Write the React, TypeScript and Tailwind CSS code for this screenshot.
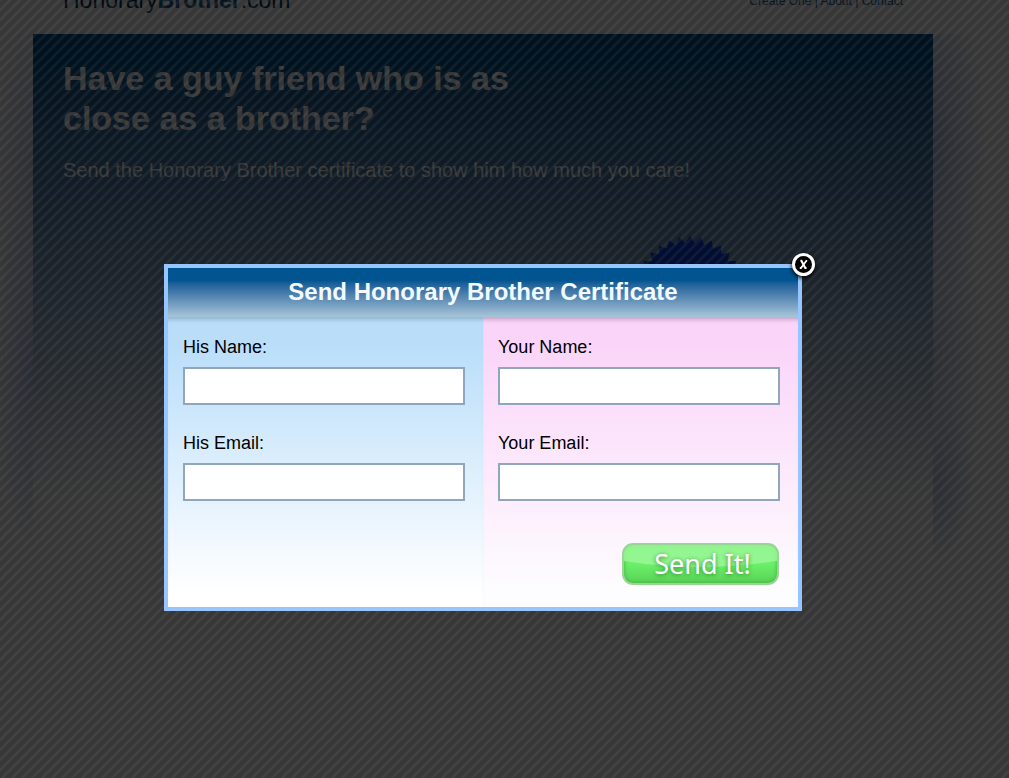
import React from "react";

const sealPoints = Array.from({ length: 64 }, (_, i) => {
  const radius = i % 2 === 0 ? 56 : 49;
  const angle = (i * Math.PI) / 32 - Math.PI / 2;
  return `${56 + radius * Math.cos(angle)},${56 + radius * Math.sin(angle)}`;
}).join(" ");

function Field({ id, label, type }: { id: string; label: string; type: string }) {
  return (
    <div className="h-24">
      <label htmlFor={id} className="block text-lg leading-5">
        {label}
      </label>
      <input
        id={id}
        type={type}
        className="mt-[10px] block h-[38px] w-full border-2 border-[#91a5bc] bg-white px-2 text-lg outline-none"
      />
    </div>
  );
}

function Backdrop() {
  return (
    <svg className="absolute inset-0 h-full w-full" aria-hidden="true">
      <defs>
        <pattern id="stripes" width="10" height="10" patternUnits="userSpaceOnUse">
          <path d="M-2 2 2-2M-2 12 12-2M8 12 12 8" stroke="#fff" strokeOpacity="0.055" strokeWidth="2.6" />
        </pattern>
      </defs>
      <rect width="100%" height="100%" fill="#000" fillOpacity="0.785" />
      <rect width="100%" height="100%" fill="url(#stripes)" />
    </svg>
  );
}

function Page() {
  return (
    <div className="min-h-screen bg-white">
      <header className="ml-[33px] mr-[76px] flex h-[34px] items-start justify-between overflow-hidden px-[30px]">
        <a href="#home" className="-mt-3 text-[23px] leading-6 text-[#003055]">
          Honorary<b className="text-[#16659c]">Brother</b>.com
        </a>
        <nav className="-mt-[7px] text-xs leading-4 text-[#16659c]">
          <a href="#create">Create One</a> | <a href="#about">About</a> | <a href="#contact">Contact</a>
        </nav>
      </header>
      <div className="flex">
        <div className="h-[520px] w-[33px] bg-[radial-gradient(ellipse_40px_180px_at_100%_65%,#c0ccf4,transparent),radial-gradient(ellipse_40px_180px_at_100%_28%,#d4daf4,transparent)]" />
        <main className="h-[520px] flex-1 bg-linear-to-b from-[#005591] from-5% to-white to-90% px-[30px] pt-6">
          <h1 className="max-w-[500px] text-[34px] font-bold leading-10 text-white">
            Have a guy friend who is as close as a brother?
          </h1>
          <p className="mt-5 text-xl leading-6 text-white">
            Send the Honorary Brother certificate to show him how much you care!
          </p>
          <svg className="ml-[571px] mt-[54px] size-[112px]" viewBox="0 0 112 112" aria-hidden="true">
            <polygon points={sealPoints} fill="#0c42e0" />
          </svg>
        </main>
        <div className="h-[520px] w-[76px] bg-[radial-gradient(ellipse_55px_170px_at_0%_22%,#c0ccf4,transparent),radial-gradient(ellipse_50px_220px_at_0%_62%,#cfd9f0,transparent),radial-gradient(ellipse_40px_80px_at_0%_86%,#c8d4f4,transparent)]" />
      </div>
    </div>
  );
}

function CertificateDialog() {
  return (
    <section
      role="dialog"
      aria-labelledby="dialog-title"
      className="absolute left-[164px] top-[264px] w-[638px] border-4 border-[#99c5ff] bg-white text-black"
    >
      <header className="h-[49px] bg-linear-to-b from-[#005591] from-25% to-[#a8c5d8] pt-[9px] text-center">
        <h2 id="dialog-title" className="text-2xl font-bold leading-[30px] text-[#f2faff]">
          Send Honorary Brother Certificate
        </h2>
      </header>
      <form className="grid grid-cols-2" onSubmit={(event) => event.preventDefault()}>
        <div className="bg-linear-to-b from-[#badefa] from-10% to-white to-95% pl-[15px] pr-[18px] pt-5 shadow-[inset_0_6px_5px_-4px_#527da080]">
          <Field id="his-name" label="His Name:" type="text" />
          <Field id="his-email" label="His Email:" type="email" />
        </div>
        <div className="bg-linear-to-b from-[#fad5f9] from-10% to-[#fdfdff] to-95% pb-[22px] pl-[15px] pr-[18px] pt-5 shadow-[inset_0_6px_5px_-4px_#805c8080]">
          <Field id="your-name" label="Your Name:" type="text" />
          <Field id="your-email" label="Your Email:" type="email" />
          <button
            type="submit"
            className="relative ml-auto mr-px mt-[14px] flex h-[42px] w-[157px] items-center justify-center overflow-hidden rounded-[11px] border-2 border-[#9bd497] bg-linear-to-b from-[#6bf069] from-50% to-[#5ad357] font-['Noto_Sans',sans-serif] text-[27px] leading-8 text-white shadow-[inset_0_0_4px_#40ad3d]"
          >
            <svg className="absolute inset-0 size-full" viewBox="0 0 153 38" preserveAspectRatio="none" aria-hidden="true">
              <path d="M0 0H153V16Q76 28 0 16Z" fill="#98f695" fillOpacity="0.88" />
            </svg>
            <span className="relative pl-1 [text-shadow:0_1px_4px_#328b30]">Send It!</span>
          </button>
        </div>
      </form>
      <button
        type="button"
        aria-label="Close"
        className="absolute -right-[17px] -top-[15px] flex size-[23px] items-center justify-center rounded-full border-[3px] border-white bg-black text-white shadow-[0_2px_4px_#000]"
      >
        <svg className="size-[13px]" viewBox="0 0 13 13" fill="none" aria-hidden="true">
          <path d="M3.4 2.8H4.4L8.3 10H9.6" stroke="currentColor" strokeWidth="2.1" />
          <path d="M10.2 2.8H9.4L3.9 10H2.8" stroke="currentColor" strokeWidth="1.8" />
        </svg>
      </button>
    </section>
  );
}

export default function App() {
  return (
    <div className="relative min-h-screen overflow-hidden font-['Liberation_Sans',sans-serif]">
      <Page />
      <Backdrop />
      <CertificateDialog />
    </div>
  );
}
